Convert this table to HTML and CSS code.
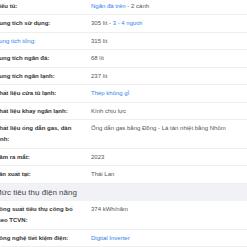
FILE: index.html
```html
<!DOCTYPE html>
<html lang="vi">
<head>
<meta charset="utf-8">
<link rel="stylesheet" href="styles.css">
</head>
<body>
<div class="specs">
  <div class="row"><div class="label">Kiểu tủ:</div><div class="value"><a class="link">Ngăn đá trên</a> - 2 cánh</div></div>
  <div class="row"><div class="label">Dung tích sử dụng:</div><div class="value">305 lít - <a class="link">3 - 4 người</a></div></div>
  <div class="row"><div class="label"><a class="link">Dung tích tổng:</a></div><div class="value">315 lít</div></div>
  <div class="row"><div class="label">Dung tích ngăn đá:</div><div class="value">68 lít</div></div>
  <div class="row"><div class="label">Dung tích ngăn lạnh:</div><div class="value">237 lít</div></div>
  <div class="row"><div class="label">Chất liệu cửa tủ lạnh:</div><div class="value"><a class="link">Thép không gỉ</a></div></div>
  <div class="row"><div class="label">Chất liệu khay ngăn lạnh:</div><div class="value">Kính chịu lực</div></div>
  <div class="row"><div class="label">Chất liệu ống dẫn gas, dàn lạnh:</div><div class="value">Ống dẫn gas bằng Đồng - Lá tản nhiệt bằng Nhôm</div></div>
  <div class="row"><div class="label">Năm ra mắt:</div><div class="value">2023</div></div>
  <div class="row"><div class="label">Sản xuất tại:</div><div class="value">Thái Lan</div></div>
  <div class="section">Mức tiêu thụ điện năng</div>
  <div class="row"><div class="label">Công suất tiêu thụ công bố theo TCVN:</div><div class="value">374 kWh/năm</div></div>
  <div class="row"><div class="label">Công nghệ tiết kiệm điện:</div><div class="value"><a class="link">Digital Inverter</a></div></div>
  <div class="section">Tiện ích</div>
</div>
</body>
</html>
```

FILE: styles.css
```css
html, body {
  margin: 0;
  padding: 0;
  background: #fff;
  overflow: hidden;
}
.specs {
  margin: -2.25px 0 0 -5px;
  width: 252px;
  font-family: "Liberation Sans", Arial, sans-serif;
  font-size: 6px;
  line-height: 11px;
}
.row {
  display: grid;
  grid-template-columns: 96px 1fr;
  padding: 2.75px 0;
  border-bottom: 1px solid #eeeeee;
}
.label {
  color: #333333;
  font-weight: bold;
  padding-right: 8px;
}
.label .link {
  font-weight: normal;
}
.value {
  color: #555555;
}
.link {
  color: #2f80ed;
  text-decoration: none;
}
.section {
  background: #f1f2f6;
  color: #444444;
  font-size: 8px;
  line-height: 11px;
  padding: 3.25px 0 3.25px 0;
}
```
